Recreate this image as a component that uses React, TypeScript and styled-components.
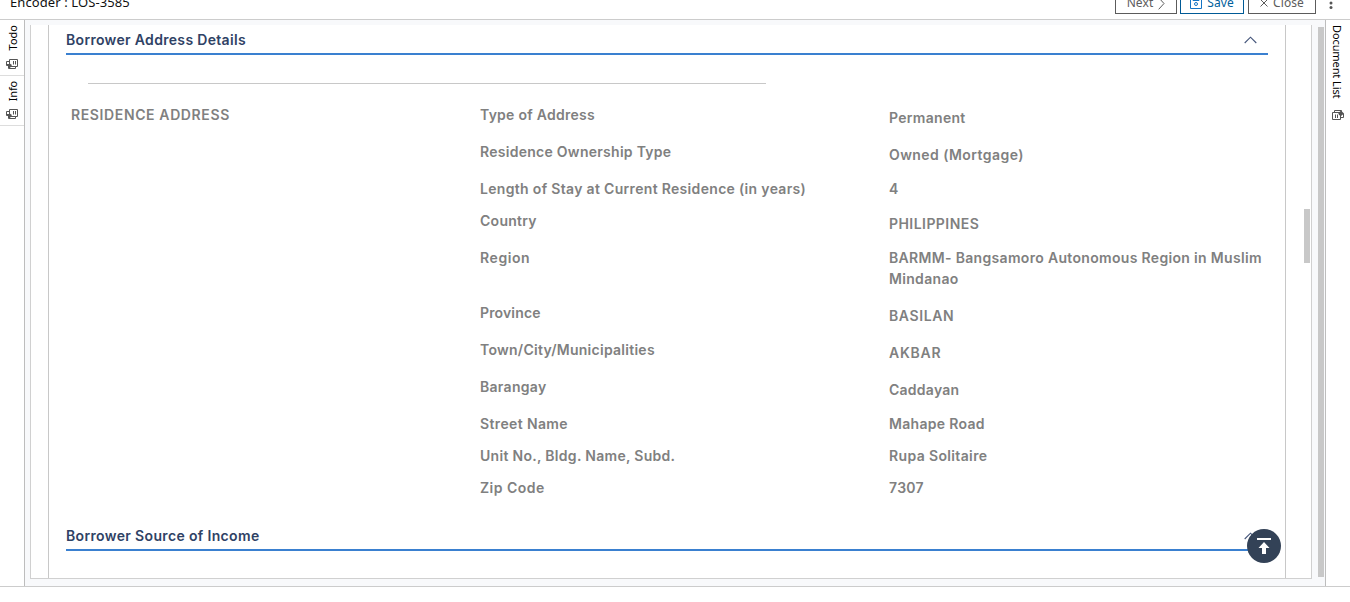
import React from "react";
import styled, { createGlobalStyle } from "styled-components";

const GlobalStyle = createGlobalStyle`
  * { box-sizing: border-box; }
  body { margin: 0; background: #fff; overflow: hidden; }
`;

const Page = styled.div`
  height: 602px;
  display: flex;
  flex-direction: column;
  overflow: hidden;
  font-family: "Noto Sans", sans-serif;
  color: #111;
`;

const TopBar = styled.header`
  height: 20px;
  flex: none;
  display: flex;
  justify-content: space-between;
  align-items: flex-end;
  border-bottom: 1px solid #ccc;
  padding: 0 17px 5px 10px;
  overflow: hidden;
`;

const PageTitle = styled.div`
  font-size: 13px;
  line-height: 20px;
  margin-bottom: 2px;
  letter-spacing: 0.1px;
`;

const Actions = styled.div`
  display: flex;
  align-items: flex-end;
  gap: 3px;
`;

const ActionButton = styled.button<{ $width: number; $primary?: boolean }>`
  width: ${(p) => p.$width}px;
  height: 24px;
  flex: none;
  display: flex;
  align-items: center;
  justify-content: center;
  gap: 5px;
  padding: 2px 0 0;
  background: #fff;
  border: 1px solid ${(p) => (p.$primary ? "#005a96" : "#5c5c5c")};
  color: ${(p) => (p.$primary ? "#00609c" : "#5c5c5c")};
  font: 12px/20px "Noto Sans", sans-serif;
  letter-spacing: 0.1px;

  &:last-of-type {
    margin-left: 1px;
  }
`;

const MoreIcon = styled.svg`
  margin: 0 0 5px 10px;
`;

const Body = styled.div`
  height: 567px;
  flex: none;
  display: flex;
  border-bottom: 1px solid #ccc;
`;

const Rail = styled.aside<{ $side: "left" | "right" }>`
  width: 25px;
  flex: none;
  border-${(p) => (p.$side === "left" ? "right" : "left")}: 1px solid #bdbdbd;
`;

const RailTab = styled.div<{ $height: number; $side: "left" | "right" }>`
  height: ${(p) => p.$height}px;
  display: flex;
  flex-direction: column;
  align-items: center;
  justify-content: space-between;
  padding: 5px 0 5px;
  border-bottom: ${(p) => (p.$side === "left" ? "1px solid #ddd" : "none")};
`;

const RailText = styled.span<{ $side: "left" | "right"; $track: number }>`
  writing-mode: vertical-rl;
  transform: ${(p) => (p.$side === "left" ? "rotate(180deg)" : "none")};
  margin-${(p) => (p.$side === "left" ? "left" : "right")}: 2px;
  font-size: 11px;
  line-height: 18px;
  letter-spacing: ${(p) => p.$track}px;
  color: #000;
`;

const Workspace = styled.main`
  flex: 1;
  display: flex;
  background: #f8f9fb;
  padding: 5px 1px 7px 5px;
`;

const Panel = styled.div`
  width: 1282px;
  display: flex;
  background: #fff;
  border: 1px solid #d0d0d0;
  border-top: none;
  padding-left: 17px;
`;

const Content = styled.div`
  width: 1238px;
  border-left: 1px solid #c8c8c8;
  border-right: 1px solid #c8c8c8;
  padding: 3px 17px 0;
`;

const InnerTrack = styled.div`
  padding: 184px 0 0 18px;
`;

const Thumb = styled.div<{ $height: number }>`
  width: 6px;
  height: ${(p) => p.$height}px;
  background: #c8c8c8;
`;

const OuterTrack = styled.div`
  padding: 2px 0 0 6px;
`;

const SectionHeader = styled.div`
  height: 27px;
  display: flex;
  justify-content: space-between;
  padding: 0 11px 0 0;
  border-bottom: 2px solid #3a80d0;
`;

const SectionTitle = styled.h2<{ $track: number }>`
  margin: 0;
  font: 600 14px/24px Inter, sans-serif;
  letter-spacing: ${(p) => p.$track}px;
  color: #2f4265;
`;

const Chevron = styled.svg`
  margin-top: 8px;
`;

const Divider = styled.div`
  width: 678px;
  margin: 28px 0 20px 22px;
  border-top: 1px solid #c8c8c8;
`;

const Details = styled.div`
  display: grid;
  grid-template-columns: 409px 1fr;
  padding-left: 5px;
`;

const Row = styled.div<{ $height: number }>`
  height: ${(p) => p.$height}px;
  display: grid;
  grid-template-columns: 409px 388px;
  align-items: start;
`;

const Field = styled.div<{ $track: number; $drop?: boolean }>`
  padding-top: ${(p) => (p.$drop ? 3 : 0)}px;
  font: 600 14px/21px Inter, sans-serif;
  letter-spacing: ${(p) => p.$track}px;
  color: #808080;
  white-space: pre;
`;

const Spacer = styled.div`
  height: 15px;
`;

const TopButton = styled.button`
  position: absolute;
  left: 1247px;
  top: 529px;
  width: 34px;
  height: 34px;
  padding: 0;
  border: 0;
  border-radius: 50%;
  background: #334257;
  display: flex;
  align-items: center;
  justify-content: center;
`;

type RowData = { label: string; value: string; height: number; lt: number; vt: number; drop?: boolean };

const rows: RowData[] = [
  { label: "Type of Address", value: "Permanent", height: 37, lt: 0.26, vt: 0.3, drop: true },
  { label: "Residence Ownership Type", value: "Owned (Mortgage)", height: 37, lt: 0.27, vt: 0.43, drop: true },
  { label: "Length of Stay at Current Residence (in years)", value: "4", height: 32, lt: 0.32, vt: 0 },
  { label: "Country", value: "PHILIPPINES", height: 37, lt: 0.27, vt: 0.45, drop: true },
  { label: "Region", value: "BARMM- Bangsamoro Autonomous Region in Muslim\nMindanao", height: 55, lt: 0.58, vt: 0.32 },
  { label: "Province", value: "BASILAN", height: 37, lt: 0.15, vt: 0.6, drop: true },
  { label: "Town/City/Municipalities", value: "AKBAR", height: 37, lt: 0.27, vt: 0.75, drop: true },
  { label: "Barangay", value: "Caddayan", height: 37, lt: 0.3, vt: 0.25, drop: true },
  { label: "Street Name", value: "Mahape Road", height: 32, lt: 0.37, vt: 0.3 },
  { label: "Unit No., Bldg. Name, Subd.", value: "Rupa Solitaire", height: 32, lt: 0.3, vt: 0.36 },
  { label: "Zip Code", value: "7307", height: 32, lt: 0.48, vt: 0.3 },
];

const PanelIcon = ({ flip }: { flip?: boolean }) => (
  <svg width="12" height="12" viewBox="0 0 12 12" fill="none" stroke="#555" strokeWidth="1">
    {flip ? (
      <>
        <path d="M.5 3.5h8v7h-8z M2.5 3V1.5h7v2 M8.5 8.5h3v-4 M3.500 5.500v3.500 M5.500 5.500v3.500" />
        <path d="M6 3.500h1l2-2 3 3-3 2.500-2-1z" fill="#555" stroke="none" />
      </>
    ) : (
      <>
        <path d="M3.5 1.5h8v7h-8z M3.5 3.5h-3v4h2 M2.5 8v2.5h7v-2 M9.500 3v3.500 M7.500 3v3.500" />
        <path d="M1 6h2v-1l3 2-2 3h-1v-2h-2z" fill="#555" stroke="none" />
      </>
    )}
  </svg>
);

const ChevronUp = () => (
  <Chevron width="13" height="8" viewBox="0 0 13 8" fill="none" stroke="#44557a" strokeWidth="1.1">
    <path d="M.7 7 6.500 1.200 12.300 7" />
  </Chevron>
);

export default function App() {
  return (
    <Page>
      <GlobalStyle />
      <TopBar>
        <PageTitle>Encoder : LOS-3585</PageTitle>
        <Actions>
          <ActionButton $width={62}>
            Next
            <svg width="7" height="13" viewBox="0 0 7 13" fill="none" stroke="currentColor">
              <path d="M.7.7 6 6.500.7 12.300" />
            </svg>
          </ActionButton>
          <ActionButton $width={64} $primary>
            <svg width="12" height="12" viewBox="0 0 12 12" fill="none" stroke="#1474c4">
              <path d="M.5.5h11v11H.5z M3 .5v3h6v-3" />
              <circle cx="6" cy="7" r="1.500" />
            </svg>
            Save
          </ActionButton>
          <ActionButton $width={68}>
            <svg width="8" height="8" viewBox="0 0 8 8" fill="none" stroke="currentColor">
              <path d="M.5.5l7 7M7.500.5l-7 7" />
            </svg>
            Close
          </ActionButton>
          <MoreIcon width="4" height="12" viewBox="0 0 4 12" fill="#555">
            <circle cx="2" cy="1.500" r="1.500" />
            <circle cx="2" cy="6" r="1.500" />
            <circle cx="2" cy="10.500" r="1.500" />
          </MoreIcon>
        </Actions>
      </TopBar>
      <Body>
        <Rail $side="left">
          <RailTab $height={56} $side="left">
            <RailText $side="left" $track={0}>Todo</RailText>
            <PanelIcon />
          </RailTab>
          <RailTab $height={50} $side="left">
            <RailText $side="left" $track={-0.2}>Info</RailText>
            <PanelIcon />
          </RailTab>
        </Rail>
        <Workspace>
          <Panel>
            <Content>
              <SectionHeader>
                <SectionTitle $track={0.32}>Borrower Address Details</SectionTitle>
                <ChevronUp />
              </SectionHeader>
              <Divider />
              <Details>
                <Field $track={0.62}>RESIDENCE ADDRESS</Field>
                <div>
                  {rows.map((r) => (
                    <Row key={r.label} $height={r.height}>
                      <Field $track={r.lt}>{r.label}</Field>
                      <Field $track={r.vt} $drop={r.drop}>{r.value}</Field>
                    </Row>
                  ))}
                </div>
              </Details>
              <Spacer />
              <SectionHeader>
                <SectionTitle $track={0.35}>Borrower Source of Income</SectionTitle>
                <ChevronUp />
              </SectionHeader>
            </Content>
            <InnerTrack>
              <Thumb $height={54} />
            </InnerTrack>
          </Panel>
          <OuterTrack>
            <Thumb $height={550} />
          </OuterTrack>
        </Workspace>
        <Rail $side="right">
          <RailTab $height={106} $side="right">
            <RailText $side="right" $track={-0.1}>Document List</RailText>
            <PanelIcon flip />
          </RailTab>
        </Rail>
      </Body>
      <TopButton aria-label="Back to top">
        <svg width="14" height="16" viewBox="0 0 14 16" fill="#fff">
          <path d="M0 0h14v2H0z M7 4l5.500 6H9v6H5v-6H1.500z" />
        </svg>
      </TopButton>
    </Page>
  );
}
